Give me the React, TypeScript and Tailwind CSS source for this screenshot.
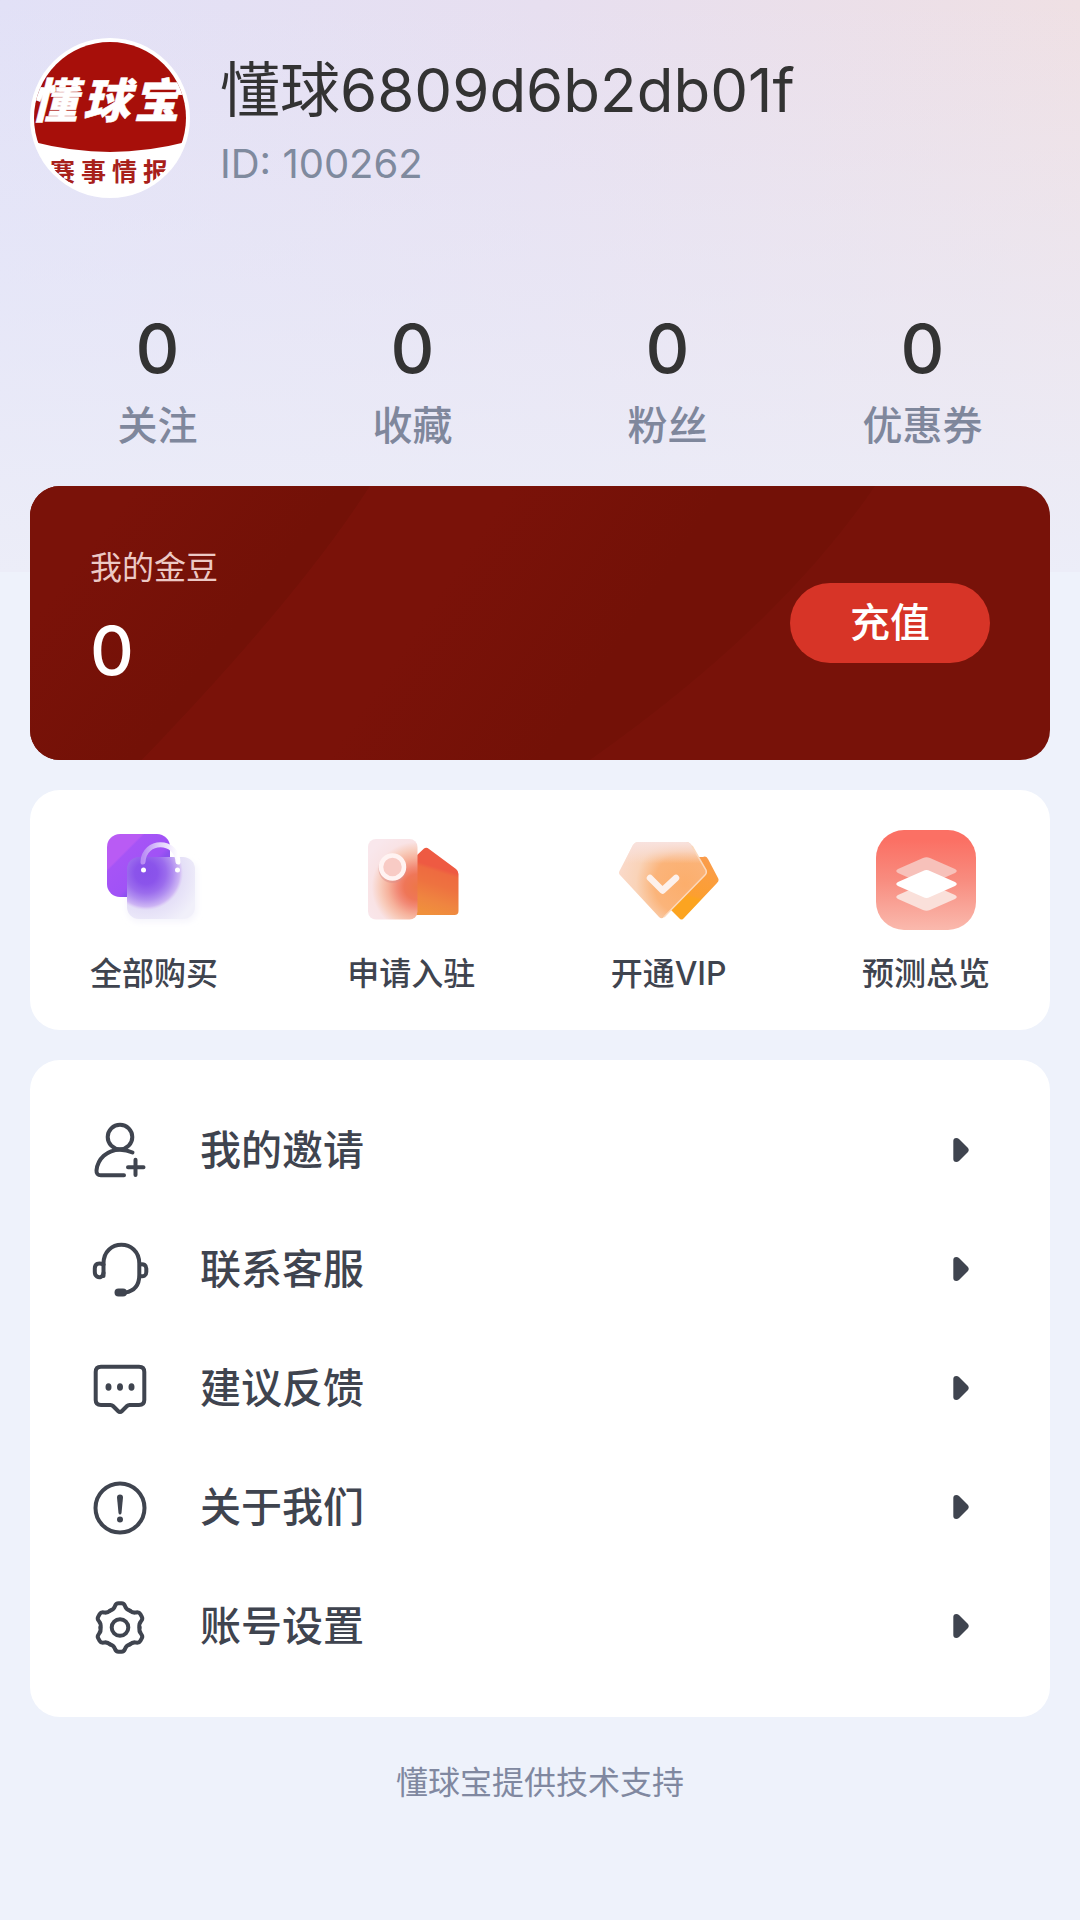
import type { ReactNode } from "react";

interface Stat {
  label: string;
  value: number;
}

interface Entry {
  label: string;
  icon: ReactNode;
}

const stats: Stat[] = [
  { label: "关注", value: 0 },
  { label: "收藏", value: 0 },
  { label: "粉丝", value: 0 },
  { label: "优惠券", value: 0 },
];

const Avatar = () => (
  <svg viewBox="0 0 160 160" className="h-40 w-40 shrink-0" role="img" aria-label="懂球宝">
    <defs>
      <clipPath id="avatar-clip">
        <circle cx="80" cy="80" r="76" />
      </clipPath>
    </defs>
    <circle cx="80" cy="80" r="80" fill="#fff" />
    <g clipPath="url(#avatar-clip)">
      <path d="M0 0H160V103Q80 125 0 103Z" fill="#a70f0a" />
      <g className="font-['Noto_Sans_CJK_SC',sans-serif] font-black italic" fill="#fff" stroke="#fff" strokeWidth="0.5" fontSize="47">
        <text x="0" y="80">懂</text>
        <text x="53" y="80">球</text>
        <text x="103" y="80">宝</text>
      </g>
      <g className="font-['Noto_Sans_CJK_SC',sans-serif] font-bold" fill="#a8201a" fontSize="25">
        <text x="20" y="143">赛</text>
        <text x="51" y="143">事</text>
        <text x="82" y="143">情</text>
        <text x="113" y="143">报</text>
      </g>
    </g>
  </svg>
);

const BagIcon = () => (
  <svg viewBox="0 0 100 100" className="h-[100px] w-[100px]" aria-hidden="true">
    <defs>
      <linearGradient id="bag-back" x1="0" y1="0" x2="1" y2="1">
        <stop offset="0.28" stopColor="#b95bf4" />
        <stop offset="0.3" stopColor="#a654f6" />
        <stop offset="0.58" stopColor="#a052f6" />
        <stop offset="0.64" stopColor="#8c50ee" />
      </linearGradient>
      <radialGradient id="bag-glow" gradientUnits="userSpaceOnUse" cx="42" cy="43" r="56">
        <stop offset="0" stopColor="#8850ea" />
        <stop offset="0.2" stopColor="#8b54eb" />
        <stop offset="0.36" stopColor="#9b6ced" />
        <stop offset="0.48" stopColor="#b08df0" />
        <stop offset="0.6" stopColor="#cdb5f4" />
        <stop offset="0.63" stopColor="#dccdf6" />
        <stop offset="0.66" stopColor="#e4dff7" />
        <stop offset="1" stopColor="#f1f0fa" />
      </radialGradient>
      <linearGradient id="bag-handle" x1="0" y1="0" x2="1" y2="0">
        <stop offset="0" stopColor="#b98df5" />
        <stop offset="0.5" stopColor="#e2d2fc" />
        <stop offset="1" stopColor="#fff" />
      </linearGradient>
      <filter id="bag-shadow" x="-20%" y="-20%" width="140%" height="140%">
        <feGaussianBlur stdDeviation="3" />
      </filter>
    </defs>
    <rect x="23" y="30" width="70" height="62" rx="13" fill="#f5f4fc" filter="url(#bag-shadow)" />
    <rect x="3" y="4" width="63" height="63" rx="13" fill="url(#bag-back)" />
    <rect x="23" y="27" width="68" height="62" rx="12" fill="url(#bag-glow)" />
    <path d="M39 32C40 9 73 9 74 32" fill="none" stroke="url(#bag-handle)" strokeWidth="5" strokeLinecap="round" />
    <circle cx="39.5" cy="40" r="2.5" fill="#fff" />
    <circle cx="73.5" cy="40" r="2.5" fill="#fff" />
  </svg>
);

const HouseIcon = () => (
  <svg viewBox="0 0 100 100" className="h-[100px] w-[100px]" aria-hidden="true">
    <defs>
      <linearGradient id="house-wall" x1="0.6" y1="0" x2="0.4" y2="1">
        <stop offset="0.3" stopColor="#ee5a42" />
        <stop offset="0.36" stopColor="#ee6b40" />
        <stop offset="0.55" stopColor="#ee7240" />
        <stop offset="0.8" stopColor="#ef8540" />
        <stop offset="1" stopColor="#f0903c" />
      </linearGradient>
      <radialGradient id="house-glow" gradientUnits="userSpaceOnUse" cx="56" cy="57" r="58">
        <stop offset="0" stopColor="#ed7648" />
        <stop offset="0.22" stopColor="#ef7658" />
        <stop offset="0.34" stopColor="#f28a76" />
        <stop offset="0.5" stopColor="#f6b29c" />
        <stop offset="0.64" stopColor="#f8cdbd" />
        <stop offset="0.78" stopColor="#f9e3e5" />
        <stop offset="1" stopColor="#f9e7ec" />
      </radialGradient>
    </defs>
    <path d="M54 27L63 18.500Q65.500 17 68 19L95 39Q97.500 41 97.500 44V81Q97.500 85 93.500 85H54Z" fill="url(#house-wall)" />
    <rect x="7" y="9" width="49.500" height="80.500" rx="8" fill="url(#house-glow)" />
    <circle cx="31.500" cy="39" r="12" fill="none" stroke="#d98f8c" strokeWidth="4" opacity="0.45" />
    <circle cx="31.500" cy="37" r="11.500" fill="#f8cbc5" stroke="#fff3f2" strokeWidth="4.500" />
  </svg>
);

const VipIcon = () => (
  <svg viewBox="0 0 100 100" className="h-[100px] w-[100px]" aria-hidden="true">
    <defs>
      <linearGradient id="vip-back" x1="0.6" y1="0" x2="0.4" y2="1">
        <stop offset="0" stopColor="#fa9c4c" />
        <stop offset="0.62" stopColor="#fc9f30" />
        <stop offset="0.66" stopColor="#fca420" />
      </linearGradient>
      <radialGradient id="vip-glow" gradientUnits="userSpaceOnUse" cx="66" cy="54" r="68">
        <stop offset="0" stopColor="#fcae6c" />
        <stop offset="0.45" stopColor="#fbb47a" />
        <stop offset="0.58" stopColor="#fac398" />
        <stop offset="0.72" stopColor="#f9d3b8" />
        <stop offset="1" stopColor="#fadacb" />
      </radialGradient>
      <linearGradient id="vip-top" x1="0" y1="0" x2="0" y2="1">
        <stop offset="0" stopColor="#f8e2de" />
        <stop offset="0.12" stopColor="#f8e0da" stopOpacity="0.7" />
        <stop offset="0.28" stopColor="#f8e0da" stopOpacity="0" />
      </linearGradient>
    </defs>
    <path d="M70 27H84Q87 25.500 89 29L99 48Q100.500 51 98 53L65 88Q62.500 91 60 88L52 80Z" fill="url(#vip-back)" />
    <path d="M19 12H67Q71 12 73 16L87 40Q88 43 86 45L45 87Q42.500 89.500 40 87L1 45Q-1 43 1 40L14 15Q16 12 19 12Z" fill="url(#vip-glow)" />
    <path d="M19 12H67Q71 12 73 16L87 40Q88 43 86 45L45 87Q42.500 89.500 40 87L1 45Q-1 43 1 40L14 15Q16 12 19 12Z" fill="url(#vip-top)" />
    <path d="M73 16L87 40Q88 43 86 45L45 87" fill="none" stroke="#fbd9bd" strokeWidth="1.500" />
    <path d="M31 48L43.500 60.500L57 48" fill="none" stroke="#fdf1ec" strokeWidth="6.500" strokeLinecap="round" strokeLinejoin="round" />
  </svg>
);

const LayersIcon = () => (
  <svg viewBox="0 0 100 100" className="h-[100px] w-[100px]" aria-hidden="true">
    <defs>
      <linearGradient id="layers-bg" x1="0" y1="0" x2="0" y2="1">
        <stop offset="0.1" stopColor="#fb7064" />
        <stop offset="0.5" stopColor="#f88c7f" />
        <stop offset="1" stopColor="#fab9ad" />
      </linearGradient>
    </defs>
    <rect width="100" height="100" rx="28" fill="url(#layers-bg)" />
    <path d="M22 39L47 28Q50.500 26.500 54 28L79 39Q82.500 41 79 43L54 54H47L22 43Q18.500 41 22 39Z" fill="#f7c1ba" />
    <path d="M22 65L47 54H54L79 65Q82.500 67 79 69L54 80Q50.500 81.500 47 80L22 69Q18.500 67 22 65Z" fill="#fae0da" />
    <path d="M22 52L47 41Q50.500 39 54 41L79 52Q82.500 54 79 56L54 67Q50.500 69 47 67L22 56Q18.500 54 22 52Z" fill="#fff" />
  </svg>
);

const LineIcon = ({ children }: { children: ReactNode }) => (
  <svg
    viewBox="0 0 60 60"
    className="h-[60px] w-[60px] shrink-0"
    fill="none"
    stroke="currentColor"
    strokeWidth="4"
    strokeLinecap="round"
    strokeLinejoin="round"
    aria-hidden="true"
  >
    {children}
  </svg>
);

const InviteIcon = () => (
  <LineIcon>
    <circle cx="30" cy="17" r="12.3" />
    <path d="M42.500 32.500C38.500 30.600 34 29.700 30 29.700C17 29.700 7.500 39 6.500 50.500C6.300 53.500 7.800 55.300 10.800 55.300H34" />
    <path d="M38 47.300H53.500M45.500 39.800V55" />
  </LineIcon>
);

const SupportIcon = () => (
  <LineIcon>
    <path d="M13.500 37V24.500C13.500 -0.500 49.300 -0.500 49.300 24.500V36C49.300 46.500 44.500 52 35 53.600" />
    <path d="M13.500 25.500C8.500 23 4.800 25 4.800 29.500V33C4.800 37.500 8.500 38.800 11 37.800Q13 37 13.500 34" />
    <path d="M50 25.500C54 24.500 56.300 26.500 56.300 29.500V33C56.300 36.500 54 37.800 50 37" />
    <rect x="26.500" y="51.500" width="8.500" height="4" rx="2" fill="currentColor" />
  </LineIcon>
);

const FeedbackIcon = () => (
  <LineIcon>
    <path d="M11 8.700H49Q54.300 8.700 54.300 14V42Q54.300 47 49 47H39.500Q38 47 37 48L32 53Q30 55 28 53L23 48Q22 47 20.500 47H11Q5.700 47 5.700 42V14Q5.700 8.700 11 8.700Z" />
    <g fill="currentColor" stroke="none">
      <ellipse cx="18.500" cy="29" rx="3" ry="3.800" />
      <ellipse cx="30" cy="29" rx="3" ry="3.800" />
      <ellipse cx="41.500" cy="29" rx="3" ry="3.800" />
    </g>
  </LineIcon>
);

const AboutIcon = () => (
  <LineIcon>
    <circle cx="30" cy="31" r="24.500" />
    <path d="M27 20.500Q27 17.500 30 17.500Q33 17.500 33 20.500L31.500 36Q31.200 37.500 30 37.500Q28.800 37.500 28.500 36Z" fill="currentColor" stroke="none" />
    <circle cx="30" cy="42.500" r="3" fill="currentColor" stroke="none" />
  </LineIcon>
);

const gearAngles = [0, 60, 120, 180, 240, 300];

const SettingsIcon = () => (
  <LineIcon>
    <circle cx="30" cy="31.500" r="8.300" />
    {gearAngles.map((angle) => (
      <path
        key={angle}
        d="M20.200 14.600C23.500 13.500 24.300 12.500 25 10Q26 7.200 28.500 7.200H31.500Q34 7.200 35 10C35.700 12.500 36.500 13.500 39.800 14.600"
        transform={`rotate(${angle} 30 31.500)`}
      />
    ))}
  </LineIcon>
);

const ArrowIcon = () => (
  <svg viewBox="0 0 60 60" className="h-[60px] w-[60px] shrink-0" fill="currentColor" aria-hidden="true">
    <path d="M23.300 21Q23.300 18 26.300 18Q27.800 18 29 19L37.500 27.500Q40 30 37.500 32.500L29 41Q27.800 42 26.300 42Q23.300 42 23.300 39Z" />
  </svg>
);

const shortcuts: Entry[] = [
  { label: "全部购买", icon: <BagIcon /> },
  { label: "申请入驻", icon: <HouseIcon /> },
  { label: "开通VIP", icon: <VipIcon /> },
  { label: "预测总览", icon: <LayersIcon /> },
];

const menu: Entry[] = [
  { label: "我的邀请", icon: <InviteIcon /> },
  { label: "联系客服", icon: <SupportIcon /> },
  { label: "建议反馈", icon: <FeedbackIcon /> },
  { label: "关于我们", icon: <AboutIcon /> },
  { label: "账号设置", icon: <SettingsIcon /> },
];

const BalanceCard = () => (
  <section className="relative overflow-hidden rounded-[30px] bg-[#781209]">
    {/* diagonal sheen behind the balance */}
    <svg viewBox="0 0 1020 274" preserveAspectRatio="none" className="absolute inset-0 h-full w-full" aria-hidden="true">
      <defs>
        <linearGradient id="sheen-left" gradientUnits="userSpaceOnUse" x1="60" y1="60" x2="190" y2="160">
          <stop offset="0" stopColor="#7a1209" />
          <stop offset="1" stopColor="#731107" />
        </linearGradient>
        <linearGradient id="sheen-right" gradientUnits="userSpaceOnUse" x1="440" y1="60" x2="590" y2="160">
          <stop offset="0" stopColor="#7a1209" />
          <stop offset="1" stopColor="#731107" />
        </linearGradient>
      </defs>
      <path d="M0 0H340Q270 110 112 274H0Z" fill="url(#sheen-left)" />
      <path d="M340 0H845Q750 140 560 274H112Q270 110 340 0Z" fill="url(#sheen-right)" />
    </svg>
    <div className="relative flex items-center justify-between px-[60px] py-[60px]">
      <div className="pb-[14px]">
        <p className="text-[32px] leading-[44px] text-[#ecc9c5]">我的金豆</p>
        <p className="mt-6 text-[68px] leading-[72px] font-medium text-white">0</p>
      </div>
      <button type="button" className="h-20 w-[200px] rounded-full bg-[#d73427] text-[40px] leading-[44px] font-medium text-white">
        充值
      </button>
    </div>
  </section>
);

export default function App() {
  return (
    <div className="min-h-screen bg-[#eef2fb] font-['Inter','Noto_Sans_CJK_SC',sans-serif] text-[#3f444f]">
      <div className="relative px-[30px] pt-[38px] pb-[90px]">
        <div className="absolute inset-x-0 top-0 h-[572px] bg-linear-to-r from-[#e2e1f7] via-[#e7dff0] to-[#efe0e4]" />
        <div className="absolute inset-x-0 top-0 h-[572px] bg-linear-to-b from-[#e9edfb]/0 via-[#eaecf9]/50 to-[#ecedf8]" />

        <div className="relative">
          <header className="flex items-start gap-[30px]">
            <Avatar />
            <div className="pt-4">
              <h1 className="text-[60px] leading-[72px] text-[#333]">懂球6809d6b2db01f</h1>
              <p className="mt-[14px] text-[40px] leading-[48px] text-[#7f8a9e]">ID: 100262</p>
            </div>
          </header>

          <ul className="mt-[114px] mb-[38px] grid grid-cols-4 text-center">
            {stats.map((stat) => (
              <li key={stat.label}>
                <p className="text-[68px] leading-[72px] font-medium text-[#333]">{stat.value}</p>
                <p className="mt-5 text-[40px] leading-[44px] font-medium text-[#7f879c]">{stat.label}</p>
              </li>
            ))}
          </ul>

          <BalanceCard />

          <section className="mt-[30px] flex justify-between rounded-[30px] bg-white px-[60px] pt-10 pb-[34px]">
            {shortcuts.map((item) => (
              <button key={item.label} type="button" className="flex w-32 flex-col items-center gap-[22px]">
                {item.icon}
                <span className="text-[32px] leading-[44px] font-medium whitespace-nowrap">{item.label}</span>
              </button>
            ))}
          </section>

          <ul className="mt-[30px] rounded-[30px] bg-white px-[60px] pt-[30px] pb-8">
            {menu.map((item) => (
              <li key={item.label}>
                <button type="button" className="flex h-[119px] w-full items-center">
                  {item.icon}
                  <span className="ml-[50px] flex-1 text-left text-[41px] leading-[60px] font-medium">{item.label}</span>
                  <ArrowIcon />
                </button>
              </li>
            ))}
          </ul>

          <footer className="mt-11 text-center text-[32px] leading-[44px] text-[#8088a0]">懂球宝提供技术支持</footer>
        </div>
      </div>
    </div>
  );
}
